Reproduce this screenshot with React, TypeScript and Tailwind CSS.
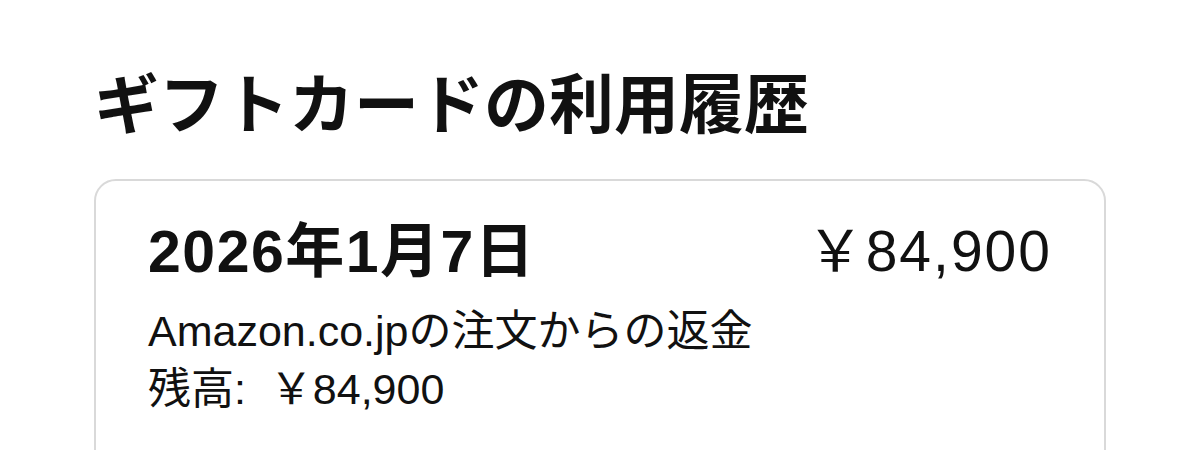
export default function App() {
  return (
    <div className="min-h-screen bg-white px-[94px] pt-[68px] text-[#111] [font-family:'Liberation_Sans','Noto_Sans_CJK_JP',sans-serif]">
      {/* Page title */}
      <h1 className="text-[65px] font-bold leading-none [font-family:'Noto_Sans_CJK_JP',sans-serif]">ギフトカードの利用履歴</h1>

      {/* Transaction card */}
      <div className="mt-[46px] rounded-[22px] border-2 border-[#d9d9d9] px-[52px] pt-[42px] pb-[60px]">
        <div className="flex items-start justify-between">
          <div className="text-[59px] font-bold leading-none tracking-[1.5px]">2026年1月7日</div>
          <div className="text-[57px] font-normal leading-none tracking-[2px]">￥84,900</div>
        </div>
        <div className="mt-[20px] text-[43px] leading-[58px]">
          <div>Amazon.co.jpの注文からの返金</div>
          <div>残高:&nbsp;&nbsp;￥84,900</div>
        </div>
      </div>
    </div>
  );
}
